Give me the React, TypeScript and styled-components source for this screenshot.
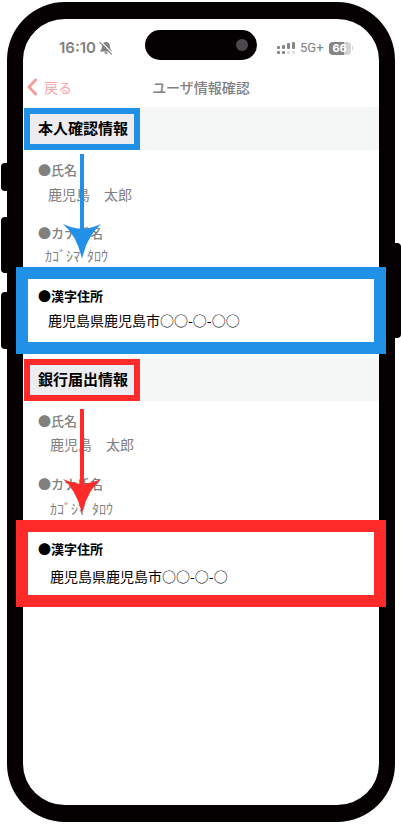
import React from "react";
import styled, { createGlobalStyle } from "styled-components";

const BLUE = "#2191e8";
const RED = "#ff2a2a";
const INK = "#050102";
const MUTED = "#808080";

const GlobalStyle = createGlobalStyle`
  *, *::before, *::after { box-sizing: border-box; }
  body {
    margin: 0;
    background: #fff;
    font-family: "Noto Sans CJK JP", sans-serif;
    color: #000;
  }
`;

const Page = styled.div`
  display: flex;
  min-height: 100vh;
  padding: 2px 6px 3px 7px;
`;

const Phone = styled.div`
  position: relative;
  flex: 1;
  min-width: 0;
  border: solid ${INK};
  border-width: 17px 16px;
  border-radius: 58px;
`;

const SideButton = styled.span<{ $side: "left" | "right"; $top: number; $length: number }>`
  position: absolute;
  ${(p) => p.$side}: -22px;
  top: ${(p) => p.$top}px;
  width: 8px;
  height: ${(p) => p.$length}px;
  background: ${INK};
  border-radius: ${(p) => (p.$side === "left" ? "4px 0 0 4px" : "0 4px 4px 0")};
`;

const StatusBar = styled.div`
  display: grid;
  grid-template-columns: 1fr 112px 1fr;
  align-items: center;
  height: 58px;
  color: ${MUTED};
`;

const Clock = styled.div`
  display: flex;
  align-items: center;
  justify-content: flex-end;
  gap: 3px;
  padding-right: 32px;
  font: 600 15px/20px Inter, sans-serif;
`;

const Island = styled.div`
  display: flex;
  align-items: center;
  justify-content: flex-end;
  height: 30px;
  margin-bottom: 6px;
  padding-right: 9px;
  background: ${INK};
  border-radius: 15px;
`;

const Camera = styled.span`
  width: 12px;
  height: 12px;
  border-radius: 50%;
  background: #4b494d;
`;

const Signals = styled.div`
  display: flex;
  align-items: center;
  gap: 5px;
  padding-left: 20px;
  font: 400 13px/20px Roboto, sans-serif;
`;

const Battery = styled.span`
  width: 22px;
  height: 13px;
  border-radius: 4px;
  background: linear-gradient(to right, #858585 70%, #d3d3d3 70%);
  color: #fff;
  font: 700 11px/13px Inter, sans-serif;
  text-align: center;
`;

const BatteryGroup = styled.span`
  display: flex;
  align-items: center;
  gap: 1px;

  &::after {
    content: "";
    width: 1px;
    height: 4px;
    background: #d3d3d3;
  }
`;

const NavBar = styled.header`
  display: grid;
  grid-template-columns: 1fr auto 1fr;
  align-items: center;
  height: 30px;
  padding: 0 4px 12px;
`;

const BackButton = styled.button`
  display: flex;
  align-items: center;
  justify-self: start;
  gap: 6px;
  padding: 0;
  border: 0;
  background: none;
  color: #f8a6a6;
  font: 400 14px/20px "Noto Sans CJK JP", sans-serif;
`;

const Title = styled.h1`
  margin: 0;
  color: ${MUTED};
  font-size: 14px;
  font-weight: 500;
  line-height: 20px;
`;

const Section = styled.section`
  position: relative;
  margin-bottom: 4px;
`;

const Band = styled.div`
  display: flex;
  align-items: flex-end;
  height: 43px;
  padding-left: 1px;
  background: #f5f7f7;
`;

const Chip = styled.h2<{ $color: string }>`
  margin: 0;
  height: 42px;
  padding: 0 6px 0 8px;
  border: 6px solid ${(p) => p.$color};
  background: #ededf1;
  font-size: 15px;
  font-weight: 700;
  line-height: 28px;
  white-space: nowrap;
`;

const Fields = styled.dl`
  margin: 0;
  padding-top: 10px;
`;

const Field = styled.div<{ $after: number }>`
  padding: 0 15px;
  margin-bottom: ${(p) => p.$after}px;
  color: ${MUTED};
`;

const Highlight = styled.div<{ $color: string }>`
  position: relative;
  min-height: 87px;
  margin: 0 -7px;
  padding: 7px 10px;
  border: 12px solid ${(p) => p.$color};
  background: #fff;
`;

const Label = styled.dt<{ $strong?: boolean }>`
  font-size: 13px;
  font-weight: ${(p) => (p.$strong ? 700 : 500)};
  line-height: 20px;
`;

const Value = styled.dd<{ $indent: number; $gap: number }>`
  margin: ${(p) => p.$gap}px 0 0 ${(p) => p.$indent}px;
  font-size: 14px;
  line-height: 20px;
  white-space: nowrap;
`;

const ArrowDrawing = styled.svg<{ $top: number }>`
  position: absolute;
  top: ${(p) => p.$top}px;
  left: 39px;
`;

const Arrow = ({ color, top }: { color: string; top: number }) => (
  <ArrowDrawing $top={top} width="40" height="106" viewBox="0 0 40 106" fill={color} aria-hidden="true">
    <path d="M18 0h4v75q9-1 17-5q-14 12-19 35q-5-23-19-35q8 4 17 5z" />
  </ArrowDrawing>
);

const MutedBell = () => (
  <svg width="14" height="14" viewBox="0 0 14 14" aria-hidden="true">
    <path d="M7 1c-2.500 0-3.800 1.900-3.900 4-.1 2.400-.7 3.300-1.800 4.500-.3.500-.1 1 .5 1h10.400c.6 0 .8-.5.5-1-1.100-1.200-1.700-2.100-1.800-4.500C10.800 2.900 9.500 1 7 1z" fill={MUTED} />
    <path d="M5.300 11.300h3.400a1.700 1.700 0 0 1-3.400 0z" fill={MUTED} />
    <path d="M1.900.7l11.300 11.500" stroke="#fff" strokeWidth="1.300" />
    <path d="M.9 1.400l11.500 11.700" stroke={MUTED} strokeWidth="1.200" strokeLinecap="round" />
  </svg>
);

const SignalBars = () => (
  <svg width="18" height="14" viewBox="0 0 18 14" fill="#858585" aria-hidden="true">
    <rect x="0" y="5" width="3" height="3" rx="1" />
    <rect x="5" y="4" width="3" height="4" rx="1" />
    <rect x="10" y="2" width="3" height="6" rx="1" />
    <rect x="15" y="1" width="3" height="7" rx="1" />
    <rect x="0" y="10" width="3" height="3" rx="1" />
    <rect x="5" y="10" width="3" height="3" rx="1" />
    <rect x="10" y="10" width="3" height="3" rx="1" fill="#dedede" />
    <rect x="15" y="10" width="3" height="3" rx="1" fill="#dedede" />
  </svg>
);

const BackChevron = () => (
  <svg width="11" height="18" viewBox="0 0 11 18" fill="none" aria-hidden="true">
    <path d="M9.500 1L2 9l7.500 8" stroke="#f79a9a" strokeWidth="2.800" />
  </svg>
);

interface InfoProps {
  title: string;
  color: string;
  gaps: [number, number, number];
  afterName: number;
  indents: [number, number, number];
  address: string;
  arrowTop: number;
}

const InfoSection = ({ title, color, gaps, afterName, indents, address, arrowTop }: InfoProps) => (
  <Section>
    <Band>
      <Chip $color={color}>{title}</Chip>
    </Band>
    <Fields>
      <Field $after={afterName}>
        <Label>●氏名</Label>
        <Value $gap={gaps[0]} $indent={indents[0]}>鹿児島　太郎</Value>
      </Field>
      <Field $after={2}>
        <Label>●カナ氏名</Label>
        <Value $gap={gaps[1]} $indent={indents[1]}>ｶｺﾞｼﾏ{"\u2002"}ﾀﾛｳ</Value>
      </Field>
      <Highlight $color={color}>
        <Label $strong>●漢字住所</Label>
        <Value $gap={gaps[2]} $indent={indents[2]}>{address}</Value>
      </Highlight>
    </Fields>
    <Arrow color={color} top={arrowTop} />
  </Section>
);

export default function App() {
  return (
    <>
      <GlobalStyle />
      <Page>
        <Phone>
          <SideButton $side="left" $top={144} $length={28} />
          <SideButton $side="left" $top={198} $length={56} />
          <SideButton $side="left" $top={273} $length={57} />
          <SideButton $side="right" $top={224} $length={95} />
          <StatusBar>
            <Clock>
              16:10
              <MutedBell />
            </Clock>
            <Island>
              <Camera />
            </Island>
            <Signals>
              <SignalBars />
              5G+
              <BatteryGroup>
                <Battery>66</Battery>
              </BatteryGroup>
            </Signals>
          </StatusBar>
          <NavBar>
            <BackButton type="button">
              <BackChevron />
              戻る
            </BackButton>
            <Title>ユーザ情報確認</Title>
          </NavBar>
          <main>
            <InfoSection
              title="本人確認情報"
              color={BLUE}
              gaps={[4, 2, 4]}
              afterName={19}
              indents={[10, 7, 10]}
              address="鹿児島県鹿児島市○○-○-○○"
              arrowTop={47}
            />
            <InfoSection
              title="銀行届出情報"
              color={RED}
              gaps={[3, 4, 7]}
              afterName={20}
              indents={[12, 12, 12]}
              address="鹿児島県鹿児島市○○-○-○"
              arrowTop={51}
            />
          </main>
        </Phone>
      </Page>
    </>
  );
}
